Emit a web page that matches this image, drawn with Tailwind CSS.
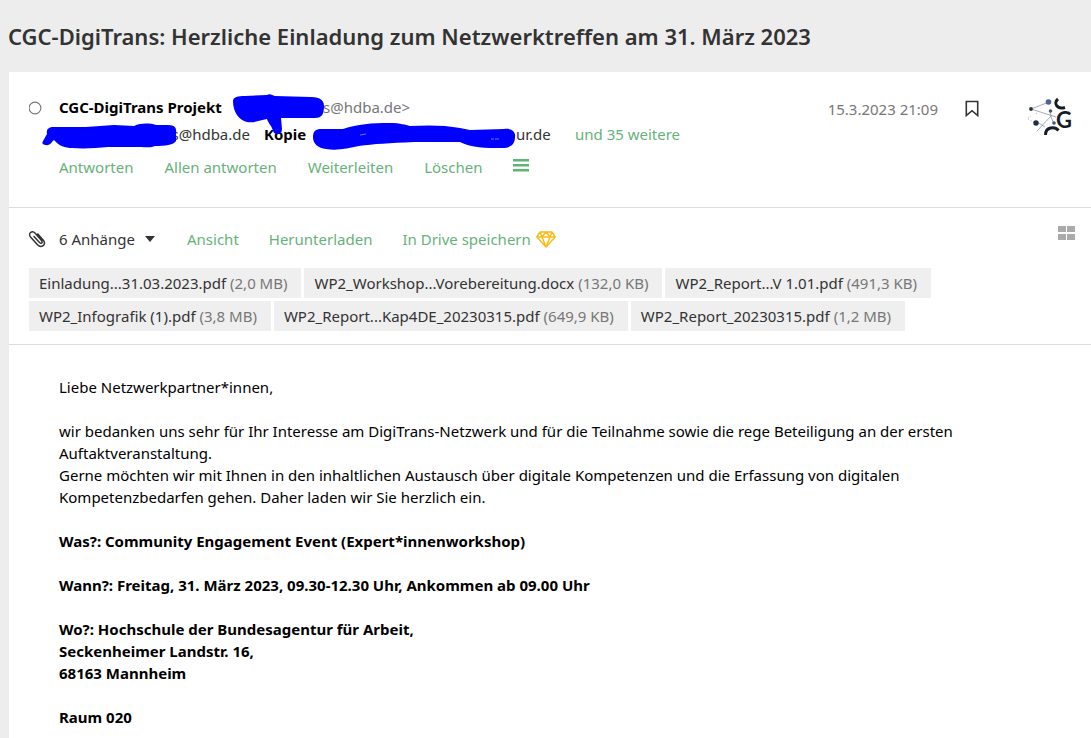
<!DOCTYPE html>
<html lang="de">
<head>
  <meta charset="UTF-8" />
  <meta name="viewport" content="width=device-width, initial-scale=1.0" />
  <title>CGC-DigiTrans: Herzliche Einladung</title>
  <script src="https://cdn.jsdelivr.net/npm/@tailwindcss/browser@4"></script>
</head>
<body class="bg-[#ededed] text-[#333] font-['Noto_Sans','Open_Sans',sans-serif] text-[15px] leading-[22px] min-h-screen flex flex-col overflow-x-hidden">

  <!-- Subject -->
  <h1 class="h-[72px] pl-2 flex items-center text-[22px] font-semibold whitespace-nowrap">CGC-DigiTrans: Herzliche Einladung zum Netzwerktreffen am 31. März 2023</h1>

  <main class="ml-[9px] bg-white flex-1">

    <!-- Mail header -->
    <header class="relative flex h-[136px] border-b border-[#ddd] pl-5 pr-[18px] pt-6">
      <button aria-label="Als gelesen markieren" class="w-[30px] h-[22px] shrink-0">
        <svg class="w-[14px] h-[22px]" viewBox="0 0 14 22" fill="none" stroke="#777" stroke-width="1.1"><circle cx="6" cy="12" r="5.900" /></svg>
      </button>
      <div class="flex-1 whitespace-nowrap">
        <div class="flex">
          <span class="w-[264px] font-bold text-black">CGC-DigiTrans Projekt</span>
          <span class="text-[#777]">s@hdba.de&gt;</span>
        </div>
        <div class="flex mt-[5px]">
          <span class="w-[205px] text-right pr-[14px]">s@hdba.de</span>
          <span class="w-[252px] font-bold text-black">Kopie</span>
          <span class="w-[59px]">ur.de</span>
          <a href="#" class="text-[#67b279]">und 35 weitere</a>
        </div>
        <nav class="flex gap-[31px] mt-[11px] text-[#67b279]">
          <a href="#">Antworten</a>
          <a href="#">Allen antworten</a>
          <a href="#">Weiterleiten</a>
          <a href="#">Löschen</a>
          <button aria-label="Mehr">
            <svg class="w-4 h-[22px]" viewBox="0 0 16 22" fill="#5fb574"><path d="M0 3h16v2.500H0zM0 8h16v2.500H0zM0 13h16v2.500H0z" /></svg>
          </button>
        </nav>
      </div>
      <time class="text-[#777] mt-[2px] mr-[27px]">15.3.2023 21:09</time>
      <button aria-label="Markieren" class="h-6 mr-[46px]">
        <svg class="w-[14px] h-6" viewBox="0 0 14 24" fill="none" stroke="#333" stroke-width="1.6"><path d="M1.3 5.500h11.400v14L7 14.700 1.300 19.500z" /></svg>
      </button>
      <svg class="w-12 h-12 -mt-1" viewBox="0 0 48 48" role="img" aria-label="CGC">
        <g stroke="#8b93a5" stroke-width=".8" fill="none">
          <path d="M6 17 24 10M6 17l25 8M12 39 27 23M12 30l8 5M25 19l1 6 3 7" />
          <path d="M3 27l7 4M12 21l-2 2M3 26l3-2" stroke-dasharray="1 2" />
        </g>
        <circle cx="23.500" cy="10" r="2.800" fill="#4a6590" />
        <circle cx="6" cy="17" r="1.900" fill="#29323f" />
        <circle cx="25.500" cy="19" r="1.800" fill="#46576f" />
        <circle cx="11" cy="31" r="2.700" fill="#1f2d40" />
        <circle cx="29" cy="31" r="1.800" fill="#3c5687" />
        <path d="M33 7c-5 4-1 11 7 8.500M20.500 43c0-8 9-9 13-4.500" fill="none" stroke="#151c28" stroke-width="3" />
        <text x="31" y="36" font-family="Lato" font-size="22" font-weight="700" fill="#151c28">G</text>
      </svg>

      <!-- Redacted addresses -->
      <svg class="absolute left-0 top-0 w-[520px] h-[90px] pointer-events-none" viewBox="9 72 520 90" fill="#00f" aria-hidden="true">
        <path d="M233 101c0-4 5-5 12-5l22-1c3-2 5 0 8 1l36 1c10 0 13 4 13 9 0 8-2 12-9 12h-34l1 11c0 6-7 7-9 2-1-5-5-8-6-12-7 1-11 4-20 3-8-2-14-10-14-21z" />
        <path d="M43 141l4-7c-1-5 2-7 6-7l33 0 28-2 20 1c7-3 15-3 22-1h12c7 0 9 3 8 9v7c-2 4-11 5-21 5-4 2-9 1-14 1l-33 0c-12 1-23 2-36 1-7 0-13-2-18-8-3 2-3 6-9 5-3-1-3-2-2-4z" />
        <path d="M313 137c0-6 3-8 8-8h22c15-5 28-6 47-6 11 0 15 2 20 3 17-1 35-1 50 2l10 2 34-1c8-1 12 3 11 8 0 7-4 11-13 11-17 0-30 0-42-6l-46 0c-25 1-40 2-55 4-11 2-21 5-33 3-8-1-13-5-13-12z" />
        <path d="M360 135l6-1M491 139h3m1 0h4" stroke="#c8c8ff" stroke-width=".6" />
      </svg>
    </header>

    <!-- Attachments -->
    <section class="border-b border-[#ddd] pl-5 pr-4 pt-5 pb-[13px] whitespace-nowrap">
      <div class="flex items-center">
        <svg class="w-[17px] h-[18px] mr-[13px]" viewBox="0 0 17 18" fill="none" stroke="#333" stroke-width="1.500" stroke-linecap="round"><path d="M5 6.500l5.500 6c1.800 1.700 3.600 0 2-1.900L6.200 3.300C3-.2-1.400 3.500 1.500 7l7 7.800c3.900 4 9.200-.3 6-4.300L8.800 4" /></svg>
        <button class="flex items-center gap-[10px] w-32">6 Anhänge
          <svg class="w-[10px] h-[6px]" viewBox="0 0 10 6" fill="#333"><path d="M0 0h10L5 6z" /></svg>
        </button>
        <nav class="flex gap-[30px] text-[#67b279]">
          <a href="#">Ansicht</a>
          <a href="#">Herunterladen</a>
          <a href="#" class="flex items-center gap-[5px]">In Drive speichern
            <svg class="w-5 h-[17px]" viewBox="0 0 20 17" fill="none" stroke="#fdbb1b" stroke-width="1.500" stroke-linejoin="round"><path d="M4 1h12l3.200 5L10 16 .8 6zM.8 6h18.400M4 1l2 5 4-5 4 5 2-5M6 6l4 10 4-10" /></svg>
          </a>
        </nav>
        <button aria-label="Kachelansicht" class="ml-auto -mt-3">
          <svg class="w-[17px] h-[14px]" viewBox="0 0 17 14" fill="#aaa"><path d="M0 0h8v6H0zM9 0h8v6H9zM0 8h8v6H0zM9 8h8v6H9z" /></svg>
        </button>
      </div>
      <ul class="mt-[18px] flex flex-wrap gap-[3px] max-w-[920px] leading-[30px] [&>li]:bg-[#efefef] [&>li]:pl-[10px] [&>li]:pr-[14px] [&_span]:text-[#777]">
        <li>Einladung...31.03.2023.pdf <span>(2,0 MB)</span></li>
        <li>WP2_Workshop...Vorebereitung.docx <span>(132,0 KB)</span></li>
        <li>WP2_Report...V 1.01.pdf <span>(491,3 KB)</span></li>
        <li>WP2_Infografik (1).pdf <span>(3,8 MB)</span></li>
        <li>WP2_Report...Kap4DE_20230315.pdf <span>(649,9 KB)</span></li>
        <li>WP2_Report_20230315.pdf <span>(1,2 MB)</span></li>
      </ul>
    </section>

    <!-- Message -->
    <article class="pl-[50px] pr-10 pt-[31px] text-black space-y-[22px]">
      <p>Liebe Netzwerkpartner*innen,</p>
      <p>wir bedanken uns sehr für Ihr Interesse am DigiTrans-Netzwerk und für die Teilnahme sowie die rege Beteiligung an der ersten<br />Auftaktveranstaltung.<br />Gerne möchten wir mit Ihnen in den inhaltlichen Austausch über digitale Kompetenzen und die Erfassung von digitalen<br />Kompetenzbedarfen gehen. Daher laden wir Sie herzlich ein.</p>
      <p class="font-bold">Was?: Community Engagement Event (Expert*innenworkshop)</p>
      <p class="font-bold">Wann?: Freitag, 31. März 2023, 09.30-12.30 Uhr, Ankommen ab 09.00 Uhr</p>
      <p class="font-bold">Wo?: Hochschule der Bundesagentur für Arbeit,<br />Seckenheimer Landstr. 16,<br />68163 Mannheim</p>
      <p class="font-bold">Raum 020</p>
    </article>

  </main>

</body>
</html>
